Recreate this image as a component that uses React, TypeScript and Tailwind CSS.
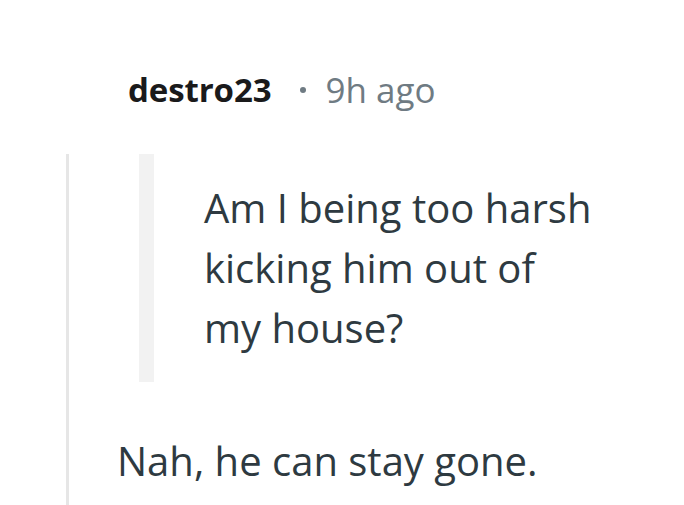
import React from 'react';

export default function App() {
  return (
    <div
      className="w-[684px] h-[505px] overflow-hidden bg-white"
      style={{ fontFamily: '"Open Sans", "Noto Sans", sans-serif' }}
    >
      {/* Comment header */}
      <div className="pt-[67px] pl-[128px]">
        <div className="flex items-center h-[46px]">
          <span className="text-[33px] leading-[46px] font-bold text-[#1a1a1b] tracking-[-0.1px]">destro23</span>
          <span className="ml-[29px] mr-[19px] w-[6px] h-[6px] rounded-full bg-[#6f7b83]" />
          <span className="text-[35px] leading-[46px] text-[#6f7b83]">9h ago</span>
        </div>
      </div>

      {/* Comment body with thread line */}
      <div className="ml-[66px] mt-[41px] border-l-[3px] border-[#e6e6e6] h-[360px]">
        <blockquote className="ml-[70px] border-l-[15px] border-[#f2f2f2] pl-[50px] py-[24px]">
          <p className="text-[40px] leading-[60px] text-[#2e3a41] w-[392px]">
            Am I being too harsh kicking him out of my house?
          </p>
        </blockquote>
        <p className="mt-[49px] pl-[48px] text-[40px] leading-[60px] text-[#2e3a41]">
          Nah, he can stay gone.
        </p>
      </div>
    </div>
  );
}
